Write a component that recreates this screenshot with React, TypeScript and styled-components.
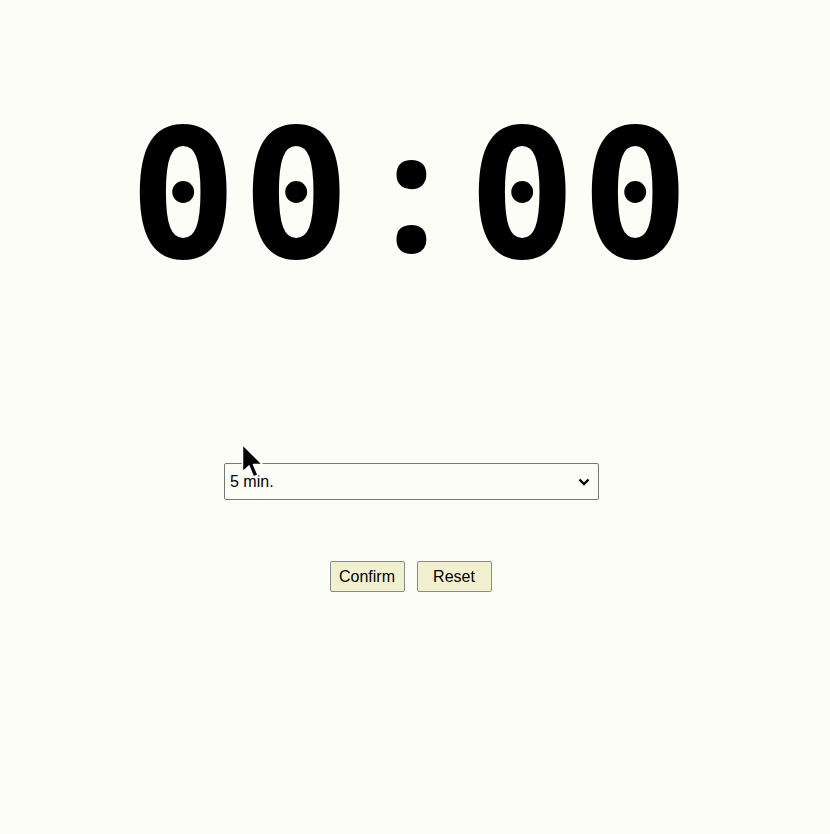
import React from "react";
import styled, { createGlobalStyle } from "styled-components";

const Global = createGlobalStyle`
  html, body {
    margin: 0;
    padding: 0;
    background: #fdfdf7;
  }
  body {
    font-family: "Liberation Sans", Arial, sans-serif;
  }
`;

const Page = styled.div`
  position: relative;
  width: 830px;
  height: 834px;
  display: flex;
  flex-direction: column;
  align-items: center;
  padding-right: 7px;
  box-sizing: border-box;
`;

const Clock = styled.div`
  margin-top: 99px;
  display: flex;
  align-items: baseline;
  height: 194px;
  color: #000;
  white-space: pre;
`;

const Digits = styled.span`
  font-family: "DejaVu Sans Mono", monospace;
  font-weight: bold;
  font-size: 180px;
  line-height: 188px;
  letter-spacing: 4.6px;
`;

const Colon = styled.span`
  font-family: "Noto Sans Mono", "DejaVu Sans Mono", monospace;
  font-weight: bold;
  font-size: 165px;
  line-height: 188px;
  width: 113px;
  text-align: center;
  transform: translateY(-5px);
`;

const chevron =
  "url(\"data:image/svg+xml,%3Csvg xmlns='http://www.w3.org/2000/svg' width='12' height='8' viewBox='0 0 12 8'%3E%3Cpath d='M1.5 1.5 L6 6 L10.5 1.5' fill='none' stroke='%23000' stroke-width='2.4'/%3E%3C/svg%3E\")";

const Select = styled.select`
  margin-top: 170px;
  width: 375px;
  height: 37px;
  font-family: "Liberation Sans", Arial, sans-serif;
  font-size: 16px;
  color: #000;
  appearance: none;
  background: #fdfdf7 ${chevron} no-repeat right 8px center;
  border: 1px solid #767676;
  border-radius: 2px;
  padding: 0 5px;
`;

const Buttons = styled.div`
  margin-top: 61px;
  margin-right: 2px;
  display: flex;
  gap: 12px;
`;

const Button = styled.button`
  width: 75px;
  height: 31px;
  font-family: "Liberation Sans", Arial, sans-serif;
  font-size: 16px;
  color: #000;
  background: #f2f1cf;
  border: 1px solid #8a8a8a;
  border-radius: 2px;
  padding: 0;
`;

const Cursor = styled.svg`
  position: absolute;
  left: 241px;
  top: 443px;
  pointer-events: none;
`;

export default function App() {
  return (
    <>
      <Global />
      <Page>
        <Clock>
          <Digits>00</Digits>
          <Colon>:</Colon>
          <Digits>00</Digits>
        </Clock>
        <Select defaultValue="5">
          <option value="1">1 min.</option>
          <option value="5">5 min.</option>
          <option value="10">10 min.</option>
        </Select>
        <Buttons>
          <Button>Confirm</Button>
          <Button>Reset</Button>
        </Buttons>
        <Cursor width="26" height="38" viewBox="0 0 26 38">
          <path
            d="M1.5 1.5 L1.5 29 L8 23 L12.5 34 L17 32 L12.5 21.5 L21.5 21.5 Z"
            fill="#000"
            stroke="#fff"
            strokeWidth="1.5"
            strokeLinejoin="round"
          />
        </Cursor>
      </Page>
    </>
  );
}
